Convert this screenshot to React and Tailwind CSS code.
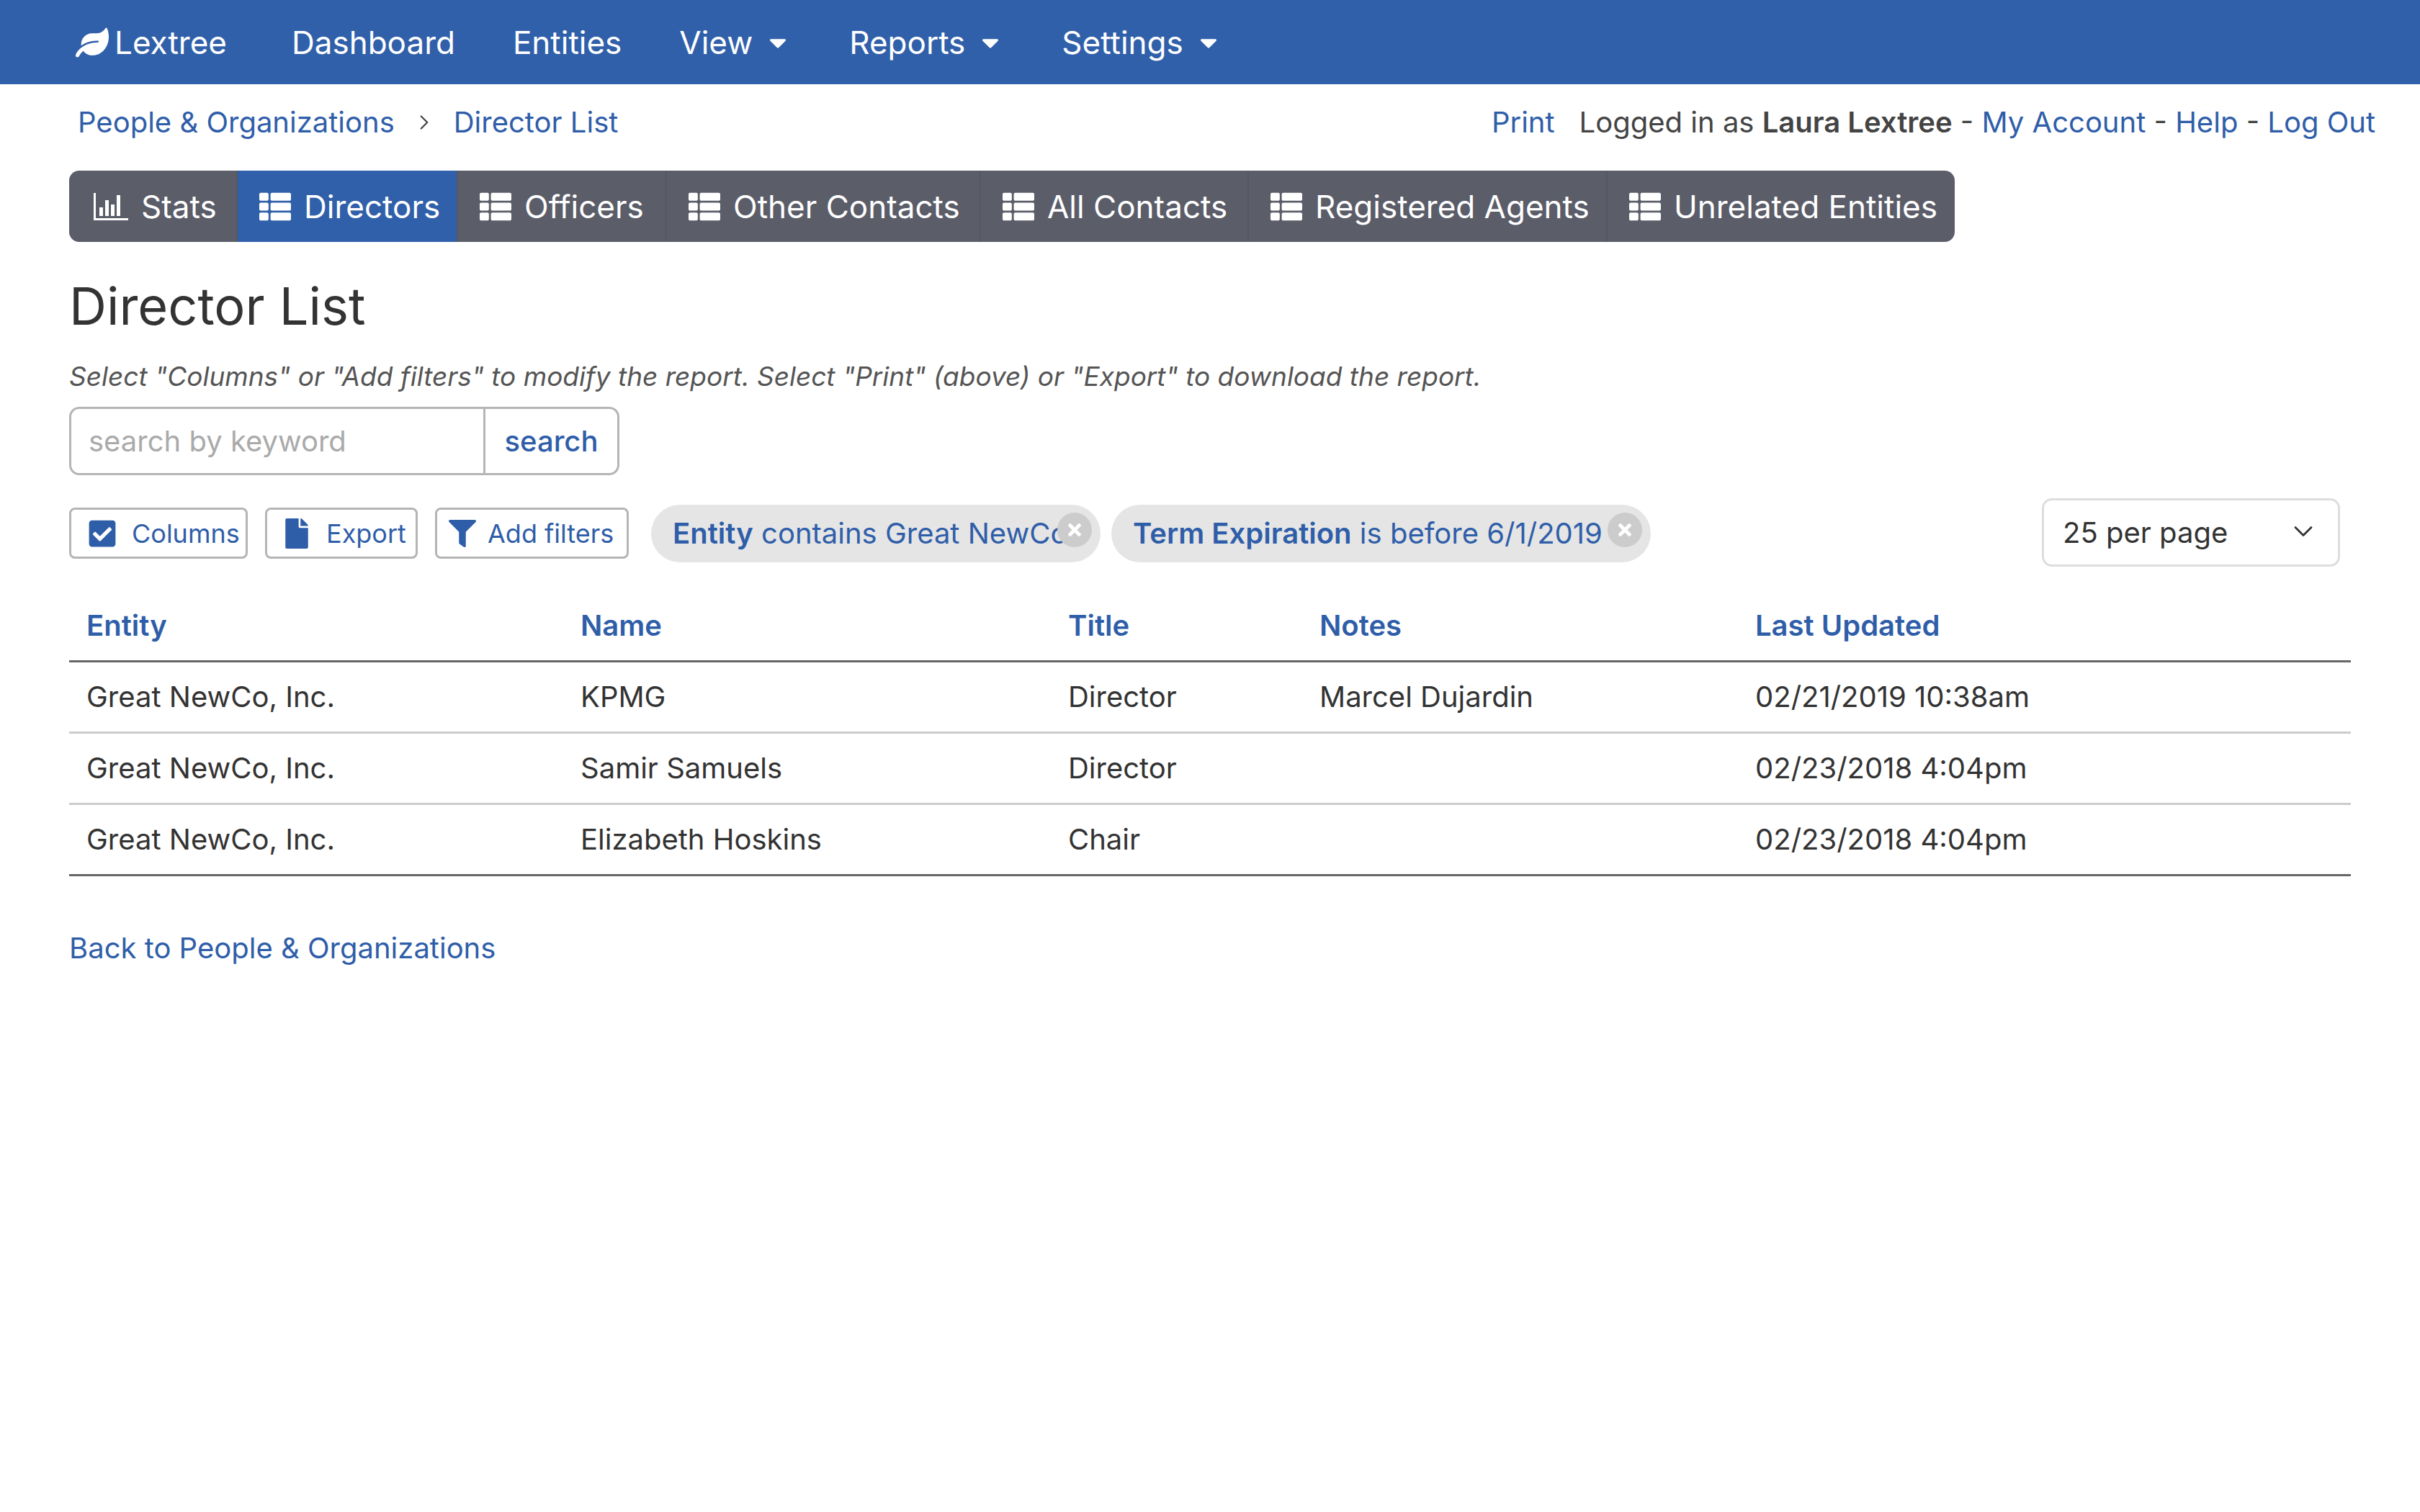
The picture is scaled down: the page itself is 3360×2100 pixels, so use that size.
import { FaLeaf, FaThList, FaCheckSquare, FaFile, FaFilter, FaTimes, FaCaretDown } from "react-icons/fa";
import { ChevronDown, ChevronRight } from "lucide-react";

const tabs = [
  { label: "Stats", width: "w-[234px]", pad: "pl-[34px]" },
  { label: "Directors", width: "w-[306px]", active: true },
  { label: "Officers", width: "w-[290px]" },
  { label: "Other Contacts", width: "w-[436px]" },
  { label: "All Contacts", width: "w-[372px]" },
  { label: "Registered Agents", width: "w-[498px]" },
  { label: "Unrelated Entities", width: "w-[482px]" },
];

const rows = [
  ["Great NewCo, Inc.", "KPMG", "Director", "Marcel Dujardin", "02/21/2019 10:38am"],
  ["Great NewCo, Inc.", "Samir Samuels", "Director", "", "02/23/2018 4:04pm"],
  ["Great NewCo, Inc.", "Elizabeth Hoskins", "Chair", "", "02/23/2018 4:04pm"],
];

function NavItem({ children, caret }) {
  return (
    <a className="flex items-center gap-[22px] text-white">
      {children}
      {caret && <FaCaretDown className="text-[38px] -ml-[6px]" />}
    </a>
  );
}

function StatsIcon() {
  return (
    <svg viewBox="0 0 48 38" className="w-[48px] h-[38px]" fill="white">
      <path d="M0 0h3v35h45v3H0z" />
      <rect x="8" y="20" width="5" height="12" />
      <rect x="16" y="10" width="5" height="22" />
      <rect x="24" y="16" width="5" height="16" />
      <rect x="32" y="3" width="5" height="29" />
    </svg>
  );
}

function Chip({ bold, rest, className }) {
  return (
    <div className={`flex items-start h-[80px] rounded-[40px] bg-[#e5e5e5] pl-[30px] ${className}`}>
      <span className="self-center whitespace-nowrap text-[#2f5ea9] text-[40px]">
        <b className="font-semibold">{bold}</b> {rest}
      </span>
      <span className="absolute top-[11px] right-[12px] flex items-center justify-center w-[48px] h-[48px] rounded-full bg-[#cccccc] text-white">
        <FaTimes className="text-[26px]" />
      </span>
    </div>
  );
}

function ToolButton({ icon, children, className }) {
  return (
    <button className={`flex items-center h-[71px] rounded-[8px] border-[3px] border-[#b5b5b5] bg-white text-[#2f5ea9] text-[36px] ${className}`}>
      {icon}
      {children}
    </button>
  );
}

export default function App() {
  return (
    <div className="min-h-[2100px] bg-white text-[#444] font-[Inter,sans-serif] text-[40px]">
      {/* top nav */}
      <header className="flex items-center h-[117px] bg-[#3160aa] pl-[105px] text-[44px] gap-[80px]">
        <a className="flex items-center gap-[8px] text-white mr-[10px]">
          <FaLeaf className="text-[46px]" />
          Lextree
        </a>
        <NavItem>Dashboard</NavItem>
        <NavItem>Entities</NavItem>
        <NavItem caret>View</NavItem>
        <NavItem caret>Reports</NavItem>
        <NavItem caret>Settings</NavItem>
      </header>

      {/* breadcrumb + account */}
      <div className="flex items-center justify-between h-[104px] pl-[108px] pr-[62px] pt-[2px]">
        <div className="flex items-center text-[#2f5ea9]">
          <a>People &amp; Organizations</a>
          <ChevronRight className="w-[34px] h-[34px] mx-[24px] text-[#444]" strokeWidth={1.6} />
          <a>Director List</a>
        </div>
        <div className="flex items-center">
          <a className="text-[#2f5ea9] mr-[34px]">Print</a>
          <span>Logged in as <b className="font-semibold">Laura Lextree</b> - <a className="text-[#2f5ea9]">My Account</a> - <a className="text-[#2f5ea9]">Help</a> - <a className="text-[#2f5ea9]">Log Out</a></span>
        </div>
      </div>

      <main className="mt-[16px] px-[96px]">
        {/* tabs */}
        <nav className="flex w-[2618px] h-[99px] rounded-[14px] overflow-hidden bg-[#5b5d69] text-white text-[44px]">
          {tabs.map((t) => (
            <a
              key={t.label}
              className={`flex items-center gap-[18px] shrink-0 border-r-[2px] border-[#555763] last:border-r-0 ${t.pad || "pl-[30px]"} ${t.width} ${t.active ? "bg-[#3160aa] border-r-0" : ""}`}
            >
              {t.label === "Stats" ? <StatsIcon /> : <FaThList className="text-[44px]" />}
              {t.label}
            </a>
          ))}
        </nav>

        <h1 className="mt-[46px] text-[72px] leading-[86px] text-[#333]">Director List</h1>
        <p className="mt-[30px] italic text-[37px] leading-[50px] text-[#555]">
          Select "Columns" or "Add filters" to modify the report. Select "Print" (above) or "Export" to download the report.
        </p>

        {/* search */}
        <div className="flex mt-[17px] w-[764px] h-[95px] rounded-[14px] border-[3px] border-[#b5b5b5]">
          <input
            placeholder="search by keyword"
            className="w-[572px] pl-[24px] bg-transparent outline-none placeholder:text-[#aaa]"
          />
          <button className="flex-1 border-l-[3px] border-[#b5b5b5] text-[#2f5ea9] font-medium">search</button>
        </div>

        {/* toolbar */}
        <div className="relative flex items-start mt-[32px] h-[95px]">
          <div className="flex items-center gap-[24px] mt-[13px]">
            <ToolButton className="w-[248px] pl-[22px] gap-[20px]" icon={<FaCheckSquare className="text-[42px]" />}>Columns</ToolButton>
            <ToolButton className="w-[212px] pl-[20px] gap-[20px]" icon={<FaFile className="text-[42px]" />}>Export</ToolButton>
            <ToolButton className="w-[269px] pl-[16px] gap-[16px]" icon={<FaFilter className="text-[38px]" />}>Add filters</ToolButton>
          </div>
          <div className="flex items-center gap-[15px] ml-[31px] mt-[9px]">
            <div className="relative"><Chip className="w-[624px]" bold="Entity" rest="contains Great NewCo" /></div>
            <div className="relative"><Chip className="w-[749px]" bold="Term Expiration" rest="is before 6/1/2019" /></div>
          </div>
          <div className="flex items-center justify-between ml-auto mr-[15px] w-[414px] h-[95px] rounded-[14px] border-[3px] border-[#dddddd] pl-[26px] pr-[26px] text-[#333]">
            25 per page
            <ChevronDown className="w-[44px] h-[44px] -mt-[4px]" strokeWidth={1.5} />
          </div>
        </div>

        {/* table */}
        <table className="mt-[35px] w-[3168px] table-fixed border-collapse">
          <colgroup>
            <col className="w-[686px]" />
            <col className="w-[677px]" />
            <col className="w-[349px]" />
            <col className="w-[605px]" />
            <col className="w-[851px]" />
          </colgroup>
          <thead>
            <tr className="h-[96px] border-b-[3px] border-[#666]">
              {["Entity", "Name", "Title", "Notes", "Last Updated"].map((h) => (
                <th key={h} className="pl-[24px] text-left font-semibold text-[#2f5ea9]">{h}</th>
              ))}
            </tr>
          </thead>
          <tbody className="text-[#333]">
            {rows.map((r, i) => (
              <tr key={i} className={`h-[99px] border-b-[3px] ${i === rows.length - 1 ? "border-[#666]" : "border-[#ccc]"}`}>
                {r.map((c, j) => (
                  <td key={j} className="pl-[24px]">{c}</td>
                ))}
              </tr>
            ))}
          </tbody>
        </table>

        <a className="block mt-[70px] text-[#2f5ea9]">Back to People &amp; Organizations</a>
      </main>
    </div>
  );
}
